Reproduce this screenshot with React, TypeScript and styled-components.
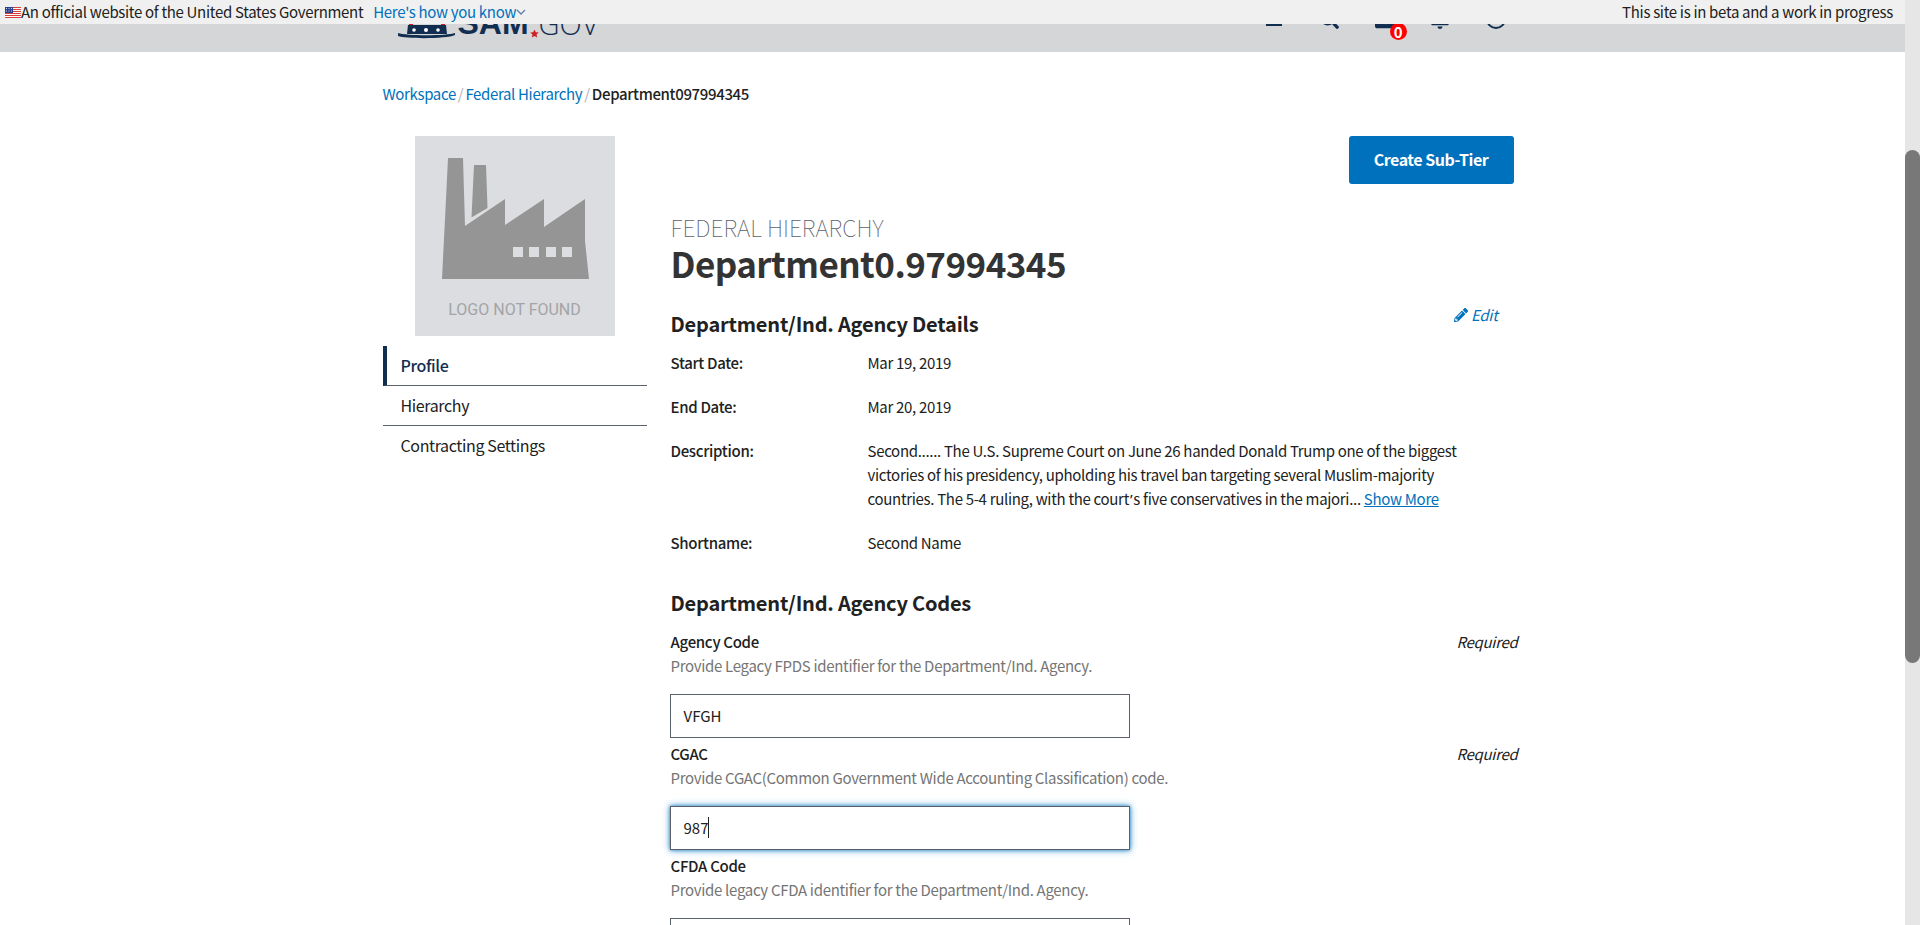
import React from "react";
import styled, { createGlobalStyle } from "styled-components";
import { FaSearch, FaBell, FaEnvelope, FaPencilAlt } from "react-icons/fa";

const sans = `"Noto Sans CJK SC", "Open Sans", sans-serif`;

const GlobalStyle = createGlobalStyle`
  html, body {
    margin: 0;
    height: 925px;
    overflow: hidden;
    background: #fff;
  }
  body {
    font-family: ${sans};
    font-size: 15px;
    letter-spacing: -0.31px;
    color: #212121;
  }
`;

const Shell = styled.div`
  display: flex;
  height: 925px;
  overflow: hidden;
`;

const Page = styled.div`
  flex: 1;
  min-width: 0;
`;

const Track = styled.div`
  width: 15px;
  background: #e6e6e6;
  padding-top: 150px;
`;

const Thumb = styled.div`
  height: 513px;
  background: #787878;
  border-radius: 8px;
`;

const Banner = styled.div`
  height: 24px;
  background: #f0f0f0;
  display: flex;
  align-items: center;
  padding: 0 12px 0 5px;
  font-size: 15px;
  line-height: 24px;
  position: relative;
  z-index: 2;
`;

const BannerLink = styled.a`
  color: #0071bc;
  margin-left: 10px;
  display: flex;
  align-items: center;
`;

const BannerNote = styled.span`
  margin-left: auto;
`;

const Header = styled.header`
  height: 28px;
  background: #d5d6d8;
  overflow: hidden;
`;

const HeaderInner = styled.div`
  width: 1140px;
  height: 28px;
  margin: 0 auto;
  display: flex;
  align-items: flex-end;
  justify-content: space-between;
`;

const Logo = styled.div`
  display: flex;
  align-items: flex-end;
  margin-left: 15px;
  color: #112e51;
  height: 28px;
  letter-spacing: 0;
`;

const LogoSam = styled.span`
  font-family: "Liberation Sans", sans-serif;
  font-weight: 700;
  font-size: 32px;
  line-height: 32px;
  margin: 0 0 13px 2px;
`;

const LogoGov = styled.span`
  font-family: "Open Sans", sans-serif;
  font-weight: 300;
  font-size: 29px;
  line-height: 32px;
  margin: 0 0 12px 0;
`;

const Tools = styled.div`
  display: flex;
  align-items: flex-end;
  color: #112e51;
  margin-right: 17px;
`;

const Tool = styled.div<{ $w: number; $gap: number; $drop: number }>`
  width: ${(p) => p.$w}px;
  margin-left: ${(p) => p.$gap}px;
  margin-bottom: ${(p) => p.$drop}px;
  display: flex;
  position: relative;
`;

const Badge = styled.span`
  position: absolute;
  left: 15px;
  top: 14px;
  width: 17px;
  height: 17px;
  border-radius: 50%;
  background: #f00;
  color: #fff;
  font-size: 15px;
  font-weight: 700;
  line-height: 17px;
  text-align: center;
`;

const Container = styled.div`
  width: 1140px;
  margin: 0 auto;
`;

const Crumbs = styled.nav`
  height: 84px;
  display: flex;
  align-items: center;
  padding-bottom: 1px;
  box-sizing: border-box;
  font-size: 15px;
  letter-spacing: -0.35px;
`;

const Crumb = styled.a`
  color: #0071bc;
`;

const Slash = styled.span`
  color: #aeb0b5;
  margin: 0 2px;
`;

const Current = styled.span`
  color: #212121;
  font-weight: 500;
`;

const Columns = styled.div`
  display: flex;
  gap: 24px;
`;

const Side = styled.aside`
  width: 264px;
  flex: none;
`;

const LogoBox = styled.div`
  width: 200px;
  height: 200px;
  margin-left: 32px;
  background: #dcdde0;
  display: flex;
  flex-direction: column;
`;

const LogoCaption = styled.div`
  font-family: Roboto, sans-serif;
  font-size: 16px;
  letter-spacing: 0;
  line-height: 20px;
  text-align: center;
  color: #a3a4a7;
  margin-top: 4px;
`;

const SideNav = styled.ul`
  list-style: none;
  margin: 10px 0 0;
  padding: 0;
`;

const SideItem = styled.li<{ $active?: boolean }>`
  height: 40px;
  box-sizing: border-box;
  display: flex;
  align-items: center;
  padding: 0 0 2px ${(p) => (p.$active ? 14 : 18)}px;
  font-size: 16px;
  letter-spacing: -0.37px;
  border-left: ${(p) => (p.$active ? "4px solid #112e51" : "none")};
  color: ${(p) => (p.$active ? "#112e51" : "#212121")};
  font-weight: ${(p) => (p.$active ? 500 : 400)};
  border-bottom: 1px solid #5b616b;
  &:last-child {
    border-bottom: none;
  }
`;

const Main = styled.main`
  flex: 1;
  min-width: 0;
`;

const ActionRow = styled.div`
  width: 843px;
  display: flex;
  justify-content: flex-end;
`;

const PrimaryButton = styled.button`
  width: 165px;
  height: 48px;
  border: none;
  border-radius: 3px;
  background: #0071bc;
  color: #fff;
  font-family: ${sans};
  font-size: 16px;
  letter-spacing: -0.45px;
  font-weight: 700;
  padding: 0 0 2px;
`;

const Eyebrow = styled.div`
  margin-top: 31px;
  font-size: 23px;
  letter-spacing: 0;
  line-height: 24px;
  font-weight: 100;
  color: #5b616b;
`;

const Title = styled.h1`
  margin: 0;
  font-size: 35px;
  letter-spacing: -0.55px;
  line-height: 48px;
  font-weight: 700;
  color: #333;
`;

const SectionHead = styled.div`
  width: 827px;
  display: flex;
  justify-content: space-between;
  margin-top: 22px;
`;

const SectionTitle = styled.h2`
  margin: 0;
  font-size: 20px;
  letter-spacing: -0.2px;
  line-height: 30px;
  font-weight: 700;
  color: #212121;
`;

const EditLink = styled.a`
  color: #0071bc;
  font-style: italic;
  font-size: 15px;
  line-height: 20px;
  display: flex;
  align-items: center;
  align-self: flex-start;
  gap: 3px;
  margin-top: -4px;
`;

const DetailList = styled.dl`
  margin: 12px 0 0;
  width: 800px;
  font-size: 15px;
  line-height: 24px;
`;

const DetailRow = styled.div`
  display: grid;
  grid-template-columns: 197px 1fr;
  margin-bottom: 20px;
`;

const DetailLabel = styled.dt`
  font-weight: 500;
`;

const DetailValue = styled.dd`
  margin: 0;
  width: 595px;
`;

const Apostrophe = styled.span`
  font-family: "Noto Sans", sans-serif;
  margin: 0 1px;
`;

const MoreLink = styled.a`
  color: #0071bc;
  text-decoration: underline;
`;

const CodesTitle = styled(SectionTitle)`
  margin: 33px 0 8px;
`;

const FieldHead = styled.div`
  width: 847px;
  display: flex;
  justify-content: space-between;
  font-size: 15px;
  line-height: 24px;
`;

const FieldLabel = styled.label`
  font-weight: 500;
`;

const Required = styled.em`
  font-style: italic;
`;

const Hint = styled.div`
  color: #757575;
  font-size: 15px;
  line-height: 24px;
  margin-bottom: 16px;
`;

const Field = styled.div`
  padding-top: 4px;
`;

const TextBox = styled.div<{ $focused?: boolean }>`
  width: 460px;
  height: 44px;
  margin-left: -1px;
  box-sizing: border-box;
  border: 1px solid #5b616b;
  display: flex;
  align-items: center;
  padding: 0 0 2px 13px;
  font-size: 15px;
  letter-spacing: 0;
  box-shadow: ${(p) => (p.$focused ? "0 0 3px #3e94cf, 0 0 7px #3e94cf" : "none")};
`;

const Caret = styled.span`
  width: 1px;
  height: 21px;
  background: #212121;
`;

const Flag = () => (
  <svg width="16" height="11" viewBox="0 0 16 11" style={{ flex: "none" }}>
    <rect width="16" height="11" fill="#fff" />
    {[0, 2, 4, 6, 8, 10].map((y) => (
      <rect key={y} y={y} width="16" height="1" fill="#d4413a" />
    ))}
    <rect width="8" height="6" fill="#2f3f8f" />
    <g fill="#c9d0e8">
      <rect x="1" y="1" width="1" height="1" />
      <rect x="3.500" y="1" width="1" height="1" />
      <rect x="6" y="1" width="1" height="1" />
      <rect x="1" y="3.500" width="1" height="1" />
      <rect x="3.500" y="3.500" width="1" height="1" />
      <rect x="6" y="3.500" width="1" height="1" />
    </g>
  </svg>
);

const Chevron = () => (
  <svg width="10" height="6" viewBox="0 0 10 6" fill="none" stroke="#5b7fa8" strokeWidth="1.3">
    <path d="M1 1l4 4 4-4" />
  </svg>
);

const HatMark = () => (
  <svg width="58" height="16" viewBox="0 0 58 16" style={{ marginBottom: 13 }}>
    <rect x="11" y="0" width="4" height="2" fill="#cd2026" />
    <rect x="43" y="0" width="4" height="2" fill="#cd2026" />
    <path d="M10 2h38l1 9H9z" fill="#112e51" />
    <path d="M0 10c8 3 49 3 57 0v2c-8 4-49 4-57 1z" fill="#112e51" />
    <g fill="#fff">
      <circle cx="16" cy="7" r="1.8" />
      <circle cx="28" cy="7" r="2" />
      <circle cx="40" cy="7" r="1.8" />
    </g>
  </svg>
);

const LogoStar = () => (
  <svg width="9" height="9" viewBox="0 0 24 24" style={{ marginBottom: 14, marginLeft: 1 }}>
    <path d="M12 1l3.400 7.600 8.100.8-6.100 5.400 1.800 8L12 18.600 4.800 22.800l1.800-8L.5 9.400l8.100-.8z" fill="#cd2026" />
  </svg>
);

const MenuIcon = () => (
  <svg width="16" height="16" viewBox="0 0 16 16" fill="#112e51">
    <rect y="0" width="16" height="2" />
    <rect y="6" width="16" height="2" />
    <rect y="12" width="16" height="2" />
  </svg>
);

const RingIcon = () => (
  <svg width="20" height="20" viewBox="0 0 20 20" fill="none" stroke="#112e51" strokeWidth="2">
    <circle cx="10" cy="10" r="9" />
  </svg>
);

const FactoryArt = () => (
  <svg width="200" height="160" viewBox="0 0 200 160" fill="#959595">
    <path d="M33 22h15l2 68 40-27v26l39-26v28l41-28v42l4 38H27l3-60z" />
    <path d="M59 29h12l1.500 43-16 9.500z" />
    <g fill="#dcdde0">
      <rect x="98" y="111" width="10" height="10" />
      <rect x="114" y="111" width="10" height="10" />
      <rect x="131" y="111" width="10" height="10" />
      <rect x="147" y="111" width="10" height="10" />
    </g>
  </svg>
);

const App: React.FC = () => {
  return (
    <Shell>
      <GlobalStyle />
      <Page>
        <Banner>
          <Flag />
          <span>An official website of the United States Government</span>
          <BannerLink>
            Here's how you know
            <Chevron />
          </BannerLink>
          <BannerNote>This site is in beta and a work in progress</BannerNote>
        </Banner>
        <Header>
          <HeaderInner>
            <Logo>
              <HatMark />
              <LogoSam>SAM</LogoSam>
              <LogoStar />
              <LogoGov>GOV</LogoGov>
            </Logo>
            <Tools>
              <Tool $w={16} $gap={0} $drop={24}>
                <MenuIcon />
              </Tool>
              <Tool $w={19} $gap={38} $drop={23}>
                <FaSearch size={19} />
              </Tool>
              <Tool $w={22} $gap={36} $drop={21}>
                <FaEnvelope size={22} />
                <Badge>0</Badge>
              </Tool>
              <Tool $w={20} $gap={33} $drop={23}>
                <FaBell size={20} />
              </Tool>
              <Tool $w={20} $gap={36} $drop={23}>
                <RingIcon />
              </Tool>
            </Tools>
          </HeaderInner>
        </Header>
        <Container>
          <Crumbs>
            <Crumb>Workspace</Crumb>
            <Slash>/</Slash>
            <Crumb>Federal Hierarchy</Crumb>
            <Slash>/</Slash>
            <Current>Department097994345</Current>
          </Crumbs>
          <Columns>
            <Side>
              <LogoBox>
                <FactoryArt />
                <LogoCaption>LOGO NOT FOUND</LogoCaption>
              </LogoBox>
              <SideNav>
                <SideItem $active>Profile</SideItem>
                <SideItem>Hierarchy</SideItem>
                <SideItem>Contracting Settings</SideItem>
              </SideNav>
            </Side>
            <Main>
              <ActionRow>
                <PrimaryButton>Create Sub-Tier</PrimaryButton>
              </ActionRow>
              <Eyebrow>FEDERAL HIERARCHY</Eyebrow>
              <Title>Department0.97994345</Title>
              <SectionHead>
                <SectionTitle>Department/Ind. Agency Details</SectionTitle>
                <EditLink>
                  <FaPencilAlt size={14} />
                  Edit
                </EditLink>
              </SectionHead>
              <DetailList>
                <DetailRow>
                  <DetailLabel>Start Date:</DetailLabel>
                  <DetailValue>Mar 19, 2019</DetailValue>
                </DetailRow>
                <DetailRow>
                  <DetailLabel>End Date:</DetailLabel>
                  <DetailValue>Mar 20, 2019</DetailValue>
                </DetailRow>
                <DetailRow>
                  <DetailLabel>Description:</DetailLabel>
                  <DetailValue>
                    Second...... The U.S. Supreme Court on June 26 handed Donald Trump one of the biggest victories of
                    his presidency, upholding his travel ban targeting several Muslim-majority countries. The 5-4 ruling,
                    with the court<Apostrophe>’</Apostrophe>s five conservatives in the majori...{" "}
                    <MoreLink>Show More</MoreLink>
                  </DetailValue>
                </DetailRow>
                <DetailRow>
                  <DetailLabel>Shortname:</DetailLabel>
                  <DetailValue>Second Name</DetailValue>
                </DetailRow>
              </DetailList>
              <CodesTitle>Department/Ind. Agency Codes</CodesTitle>
              <Field>
                <FieldHead>
                  <FieldLabel>Agency Code</FieldLabel>
                  <Required>Required</Required>
                </FieldHead>
                <Hint>Provide Legacy FPDS identifier for the Department/Ind. Agency.</Hint>
                <TextBox>VFGH</TextBox>
              </Field>
              <Field>
                <FieldHead>
                  <FieldLabel>CGAC</FieldLabel>
                  <Required>Required</Required>
                </FieldHead>
                <Hint>Provide CGAC(Common Government Wide Accounting Classification) code.</Hint>
                <TextBox $focused>
                  987
                  <Caret />
                </TextBox>
              </Field>
              <Field>
                <FieldHead>
                  <FieldLabel>CFDA Code</FieldLabel>
                </FieldHead>
                <Hint>Provide legacy CFDA identifier for the Department/Ind. Agency.</Hint>
                <TextBox />
              </Field>
            </Main>
          </Columns>
        </Container>
      </Page>
      <Track>
        <Thumb />
      </Track>
    </Shell>
  );
};

export default App;
